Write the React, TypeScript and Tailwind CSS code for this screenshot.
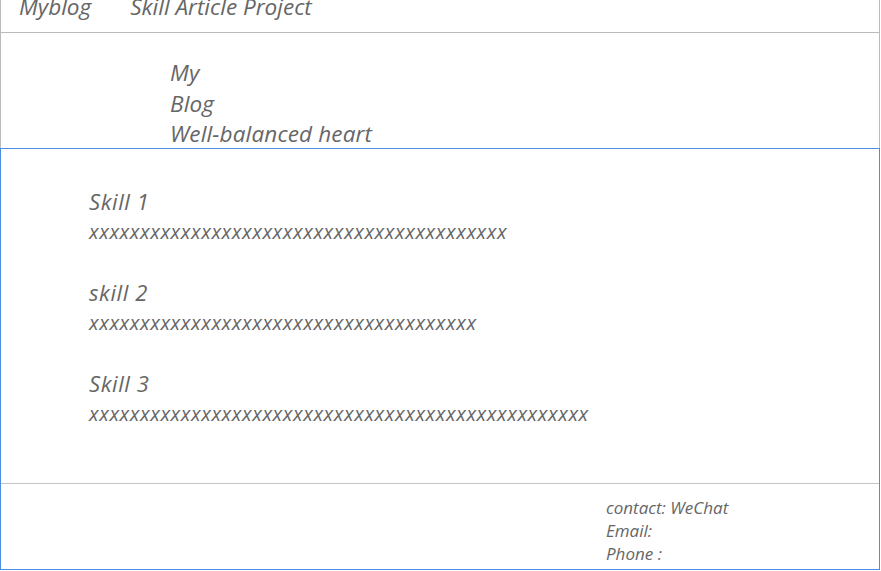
import React from "react";

export default function App() {
  const skills = [
    { title: "Skill 1", body: "x".repeat(41) },
    { title: "skill 2", body: "x".repeat(38) },
    { title: "Skill 3", body: "x".repeat(49) },
  ];
  return (
    <div className="w-[880px] h-[571px] bg-white text-[#666] italic font-['Open_Sans',sans-serif] overflow-hidden">
      <div className="h-[33px] border-x border-b border-x-[#bbb] border-b-[#bbb] flex gap-[39px] pl-[18px] overflow-hidden">
        <span className="text-[22.5px] leading-[24px] -mt-[5px]">Myblog</span>
        <span className="text-[22.5px] leading-[24px] -mt-[5px]">Skill Article Project</span>
      </div>
      <div className="h-[115px] border-x border-[#bbb] pl-[169px] pt-[25px] flex flex-col text-[22.5px] leading-[30.5px] tracking-[0.15px]">
        <span>My</span>
        <span>Blog</span>
        <span>Well-balanced heart</span>
      </div>
      <div className="h-[422px] border border-[#4a8fe3] flex flex-col">
        <div className="h-[335px] border-b border-[#c4c4c4] pl-[88px] pt-[38px] flex flex-col gap-[31px]">
          {skills.map((s) => (
            <div key={s.title} className="flex flex-col">
              <span className="text-[22px] leading-[29px] tracking-[0.6px]">{s.title}</span>
              <span className="text-[20px] leading-[31px] tracking-[0.6px]">{s.body}</span>
            </div>
          ))}
        </div>
        <div className="pl-[605px] pt-[12px] flex flex-col text-[17px] leading-[23px]">
          <span>contact: WeChat</span>
          <span>Email:</span>
          <span>Phone :</span>
        </div>
      </div>
    </div>
  );
}
